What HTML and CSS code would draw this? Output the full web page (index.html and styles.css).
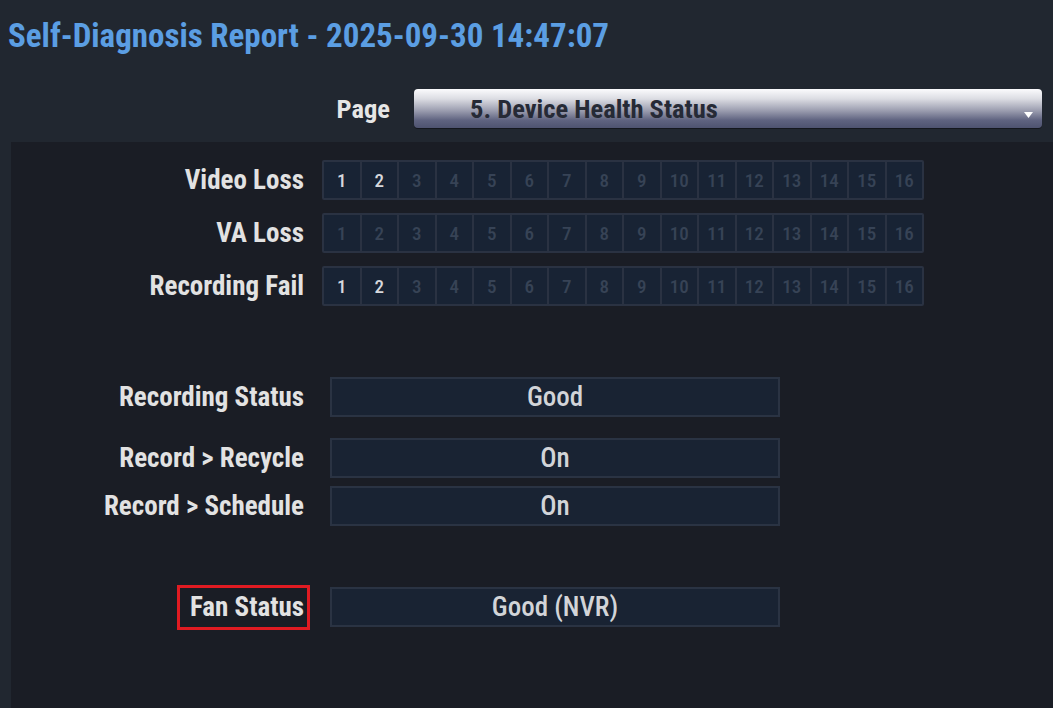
FILE: index.html
```html
<!DOCTYPE html>
<html>
<head>
<meta charset="utf-8">
<link rel="stylesheet" href="styles.css">
</head>
<body>
<div class="screen">
  <h1 class="title">Self-Diagnosis Report - 2025-09-30 14:47:07</h1>
  <div class="page-row">
    <span class="page-label">Page</span>
    <div class="select">
      <span class="select-text">5. Device Health Status</span>
      <svg class="select-arrow" width="9" height="6" viewBox="0 0 9 6"><path d="M0 0 H9 L4.5 6 Z" fill="#ffffff"/></svg>
    </div>
  </div>
  <div class="panel">
    <div class="ch-rows">
      <div class="ch-row">
        <span class="label">Video Loss</span>
        <div class="cells">
          <span class="cell on">1</span><span class="cell on">2</span><span class="cell">3</span><span class="cell">4</span><span class="cell">5</span><span class="cell">6</span><span class="cell">7</span><span class="cell">8</span><span class="cell">9</span><span class="cell">10</span><span class="cell">11</span><span class="cell">12</span><span class="cell">13</span><span class="cell">14</span><span class="cell">15</span><span class="cell">16</span>
        </div>
      </div>
      <div class="ch-row">
        <span class="label">VA Loss</span>
        <div class="cells">
          <span class="cell">1</span><span class="cell">2</span><span class="cell">3</span><span class="cell">4</span><span class="cell">5</span><span class="cell">6</span><span class="cell">7</span><span class="cell">8</span><span class="cell">9</span><span class="cell">10</span><span class="cell">11</span><span class="cell">12</span><span class="cell">13</span><span class="cell">14</span><span class="cell">15</span><span class="cell">16</span>
        </div>
      </div>
      <div class="ch-row">
        <span class="label">Recording Fail</span>
        <div class="cells">
          <span class="cell on">1</span><span class="cell on">2</span><span class="cell">3</span><span class="cell">4</span><span class="cell">5</span><span class="cell">6</span><span class="cell">7</span><span class="cell">8</span><span class="cell">9</span><span class="cell">10</span><span class="cell">11</span><span class="cell">12</span><span class="cell">13</span><span class="cell">14</span><span class="cell">15</span><span class="cell">16</span>
        </div>
      </div>
    </div>

    <div class="st-group first">
      <div class="st-row">
        <span class="label">Recording Status</span>
        <div class="value">Good</div>
      </div>
    </div>
    <div class="st-group second">
      <div class="st-row">
        <span class="label">Record &gt; Recycle</span>
        <div class="value">On</div>
      </div>
      <div class="st-row">
        <span class="label">Record &gt; Schedule</span>
        <div class="value">On</div>
      </div>
    </div>
    <div class="st-group third">
      <div class="st-row">
        <span class="label"><span class="highlight">Fan Status</span></span>
        <div class="value">Good (NVR)</div>
      </div>
    </div>
  </div>
</div>
</body>
</html>
```

FILE: styles.css
```css
* { box-sizing: border-box; }
html, body {
  margin: 0;
  padding: 0;
  background: #212730;
  width: 1053px;
  height: 708px;
  overflow: hidden;
}
.screen {
  font-family: "Roboto Condensed", "Roboto", sans-serif;
  font-weight: bold;
  display: flex;
  flex-direction: column;
  height: 708px;
}
.title {
  margin: 0;
  padding: 16px 0 0 8px;
  height: 72px;
  font-size: 33px;
  line-height: 40px;
  font-weight: bold;
  color: #5b9ee3;
}
.page-row {
  display: flex;
  align-items: center;
  justify-content: flex-end;
  padding-right: 11px;
  height: 70px;
  padding-top: 3px;
}
.page-label {
  color: #e6e6e6;
  font-size: 26.5px;
  margin-right: 24px;
}
.select {
  width: 628px;
  height: 39px;
  border-radius: 4px;
  background: linear-gradient(to bottom, #fbfbfd 0%, #dcdde3 25%, #9c9eb0 55%, #5f6380 80%, #4e5370 100%);
  display: flex;
  align-items: center;
  position: relative;
  box-shadow: 0 1px 0 #14171e;
}
.select-text {
  margin-left: 56px;
  color: #262a36;
  font-size: 26.5px;
}
.select-arrow {
  position: absolute;
  right: 9px;
  top: 23px;
}
.panel {
  flex: 1;
  margin-left: 11px;
  background: #1a1d25;
  padding-top: 18px;
}
.label {
  width: 293px;
  text-align: right;
  color: #e2e2e2;
  font-size: 27px;
  flex-shrink: 0;
}
.ch-rows {
  display: flex;
  flex-direction: column;
  gap: 13px;
}
.ch-row {
  display: flex;
  align-items: center;
  height: 40px;
}
.ch-row .label { margin-right: 18px; }
.cells {
  display: flex;
  height: 40px;
  width: 602px;
  background: #2a3242;
  padding: 2px;
  gap: 2px;
  border-radius: 2px;
}
.cell {
  flex: 1;
  background: #182334;
  color: #374356;
  font-size: 19px;
  font-weight: 500;
  display: flex;
  align-items: center;
  justify-content: center;
}
.cell.on { color: #d6d8dc; }
.st-group {
  display: flex;
  flex-direction: column;
  gap: 8px;
}
.st-group.first { margin-top: 71px; }
.st-group.second { margin-top: 21px; }
.st-group.third { margin-top: 61px; }
.st-row {
  display: flex;
  align-items: center;
  height: 40px;
}
.st-row .label { margin-right: 26px; }
.value {
  width: 450px;
  height: 40px;
  background: #192333;
  border: 2px solid #2a3343;
  color: #d2d4d8;
  font-size: 27px;
  font-weight: 500;
  display: flex;
  align-items: center;
  justify-content: center;
}
.highlight {
  display: inline-block;
  border: 3px solid #e01b22;
  padding: 3px 3px 4px 10px;
  margin-right: -6px;
}
```
